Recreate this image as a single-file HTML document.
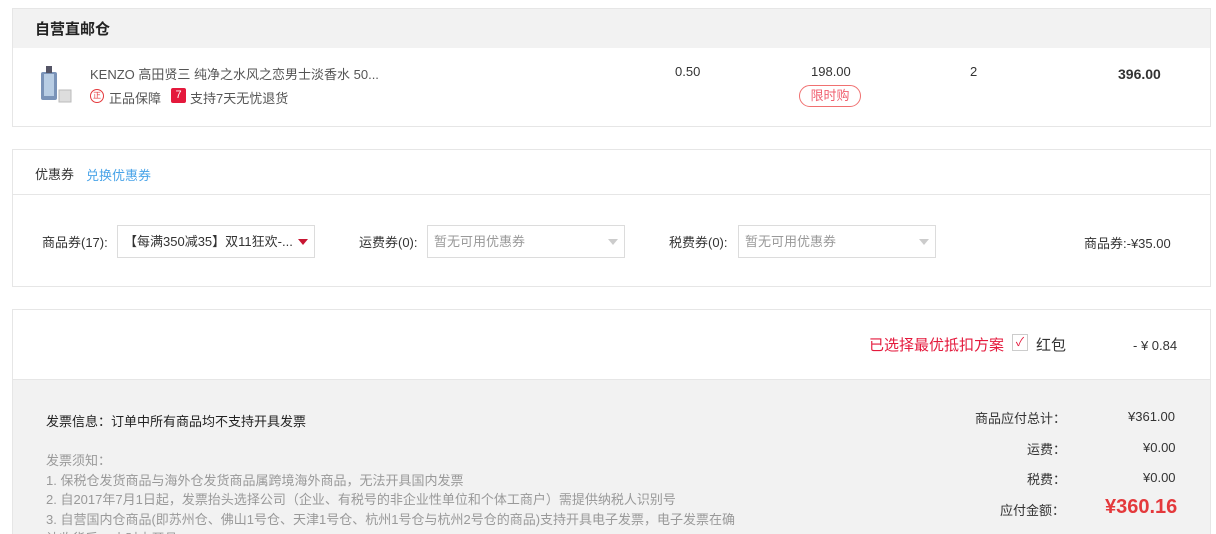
<!DOCTYPE html>
<html><head><meta charset="utf-8"><style>
*{margin:0;padding:0;box-sizing:border-box}
html,body{width:1216px;height:534px;overflow:hidden}
body{background:#fff;font-family:"Liberation Sans","Noto Sans CJK SC",sans-serif;font-size:13px;color:#333;position:relative}
.a{position:absolute;white-space:nowrap}
.box{position:absolute;left:12px;width:1199px;border:1px solid #e6e6e6}
.sel{position:absolute;height:33px;border:1px solid #dcdcdc;background:#fff;padding:0 6px;line-height:31px;font-size:13px}
.tri{position:absolute;right:6px;top:13px;width:0;height:0;border-left:5px solid transparent;border-right:5px solid transparent;border-top:6px solid #ccc}
</style></head><body>
<div class="box" style="top:8px;height:119px"></div>
<div class="a" style="left:13px;top:9px;width:1197px;height:39px;background:#f2f2f2"></div>
<div class="a" style="left:35px;top:18px;font-size:15px;font-weight:bold;color:#222">自营直邮仓</div>
<div class="a" style="left:37px;top:64px;width:40px;height:42px">
<svg width="40" height="42"><rect x="4" y="8" width="16" height="28" rx="2" fill="#7a93b8"/><rect x="7" y="10" width="10" height="22" fill="#b8cde4"/><rect x="9" y="2" width="6" height="7" fill="#556"/><rect x="22" y="26" width="12" height="12" fill="#ddd" stroke="#bbb"/></svg></div>
<div class="a" style="left:90px;top:64px;font-size:13px;color:#555">KENZO 高田贤三 纯净之水风之恋男士淡香水 50...</div>
<div class="a" style="left:90px;top:89px;width:14px;height:14px;border:1.5px solid #e4393c;border-radius:50%;color:#e4393c;font-size:8px;line-height:11px;text-align:center">正</div>
<div class="a" style="left:109px;top:88px;font-size:13px;color:#555">正品保障</div>
<div class="a" style="left:171px;top:88px;width:15px;height:15px;background:#e4193c;color:#fff;font-size:11px;line-height:15px;text-align:center;border-radius:2px">7</div>
<div class="a" style="left:190px;top:88px;font-size:13px;color:#555">支持7天无忧退货</div>
<div class="a" style="left:675px;top:64px;font-size:13px">0.50</div>
<div class="a" style="left:811px;top:64px;font-size:13px">198.00</div>
<div class="a" style="left:799px;top:85px;width:62px;height:22px;border:1px solid #f07070;border-radius:11px;color:#f06070;font-size:13px;line-height:20px;text-align:center">限时购</div>
<div class="a" style="left:970px;top:64px;font-size:13px">2</div>
<div class="a" style="left:1118px;top:66px;font-size:14px;font-weight:bold">396.00</div>

<div class="box" style="top:149px;height:138px"></div>
<div class="a" style="left:13px;top:194px;width:1197px;height:1px;background:#e6e6e6"></div>
<div class="a" style="left:35px;top:164px;font-size:13px">优惠券</div>
<div class="a" style="left:86px;top:165px;font-size:13px;color:#4aa4e8">兑换优惠券</div>
<div class="a" style="left:42px;top:232px;font-size:13px">商品券(17):</div>
<div class="sel" style="left:117px;top:225px;width:198px;color:#333">【每满350减35】双11狂欢-...<span style="position:absolute;right:6px;top:13px;border-left:5px solid transparent;border-right:5px solid transparent;border-top:6px solid #c81633"></span></div>
<div class="a" style="left:359px;top:232px;font-size:13px">运费券(0):</div>
<div class="sel" style="left:427px;top:225px;width:198px;color:#999">暂无可用优惠券<span class="tri"></span></div>
<div class="a" style="left:669px;top:232px;font-size:13px">税费券(0):</div>
<div class="sel" style="left:738px;top:225px;width:198px;color:#999">暂无可用优惠券<span class="tri"></span></div>
<div class="a" style="left:1084px;top:233px;font-size:13px">商品券:-¥35.00</div>

<div class="box" style="top:309px;height:225px;background:#f2f2f2;border-bottom:none"></div>
<div class="a" style="left:13px;top:310px;width:1197px;height:70px;background:#fff;border-bottom:1px solid #e6e6e6"></div>
<div class="a" style="left:869px;top:334px;font-size:15px;color:#e4193c">已选择最优抵扣方案</div>
<div class="a" style="left:1012px;top:334px;width:16px;height:17px;border:1px solid #ccc;color:#e4193c;font-size:12px;line-height:15px;text-align:center">✓</div>
<div class="a" style="left:1036px;top:334px;font-size:15px">红包</div>
<div class="a" style="left:1133px;top:338px;font-size:13px">- ¥ 0.84</div>
<div class="a" style="left:46px;top:411px;font-size:13px;color:#222">发票信息：订单中所有商品均不支持开具发票</div>
<div class="a" style="left:46px;top:451px;font-size:13px;color:#999;line-height:19.5px">发票须知：<br>1. 保税仓发货商品与海外仓发货商品属跨境海外商品，无法开具国内发票<br>2. 自2017年7月1日起，发票抬头选择公司（企业、有税号的非企业性单位和个体工商户）需提供纳税人识别号<br>3. 自营国内仓商品(即苏州仓、佛山1号仓、天津1号仓、杭州1号仓与杭州2号仓的商品)支持开具电子发票，电子发票在确<br>认收货后48小时内开具</div>
<div class="a" style="left:975px;top:408px;font-size:13px">商品应付总计：</div>
<div class="a" style="left:1128px;top:409px;font-size:13px">¥361.00</div>
<div class="a" style="left:1027px;top:439px;font-size:13px">运费：</div>
<div class="a" style="left:1143px;top:440px;font-size:13px">¥0.00</div>
<div class="a" style="left:1027px;top:469px;font-size:13px">税费：</div>
<div class="a" style="left:1143px;top:470px;font-size:13px">¥0.00</div>
<div class="a" style="left:1000px;top:500px;font-size:13px">应付金额：</div>
<div class="a" style="left:1105px;top:496px;font-size:20px;font-weight:bold;color:#e4393c">¥360.16</div>
</body></html>
